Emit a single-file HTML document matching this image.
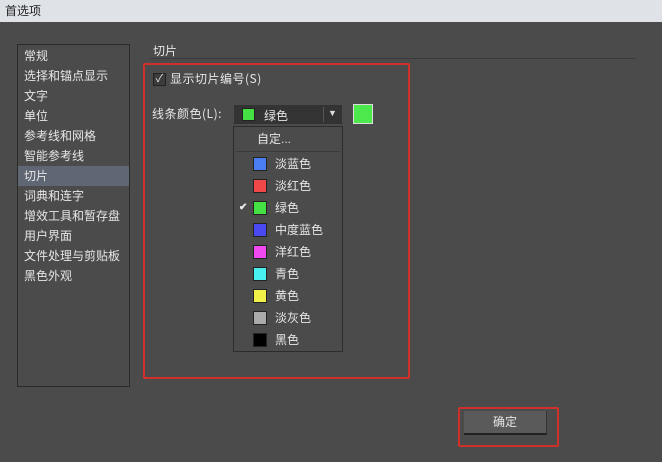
<!DOCTYPE html><html><head><meta charset="utf-8"><style>
body{margin:0;width:662px;height:462px;background:#4b4b4b;font-family:"Liberation Sans","Noto Sans CJK SC",sans-serif;font-size:12px;color:#e6e6e6;position:relative;overflow:hidden}
.a{position:absolute}
.cjk{font-family:"Noto Sans CJK SC",sans-serif}
.title{left:0;top:0;width:662px;height:22px;background:#dfe3e8;color:#222;font-size:12px;line-height:22px;text-indent:5px}
.list{left:17px;top:44px;width:111px;height:341px;border:1px solid #2a2a2a;background:#4b4b4b}
.list div{height:20px;line-height:20px;padding-left:6px}
.sel{background:#5f6674}
.red{border:2px solid #d0302a;border-radius:2px}
.item{position:absolute;left:0;width:108px;height:22px;line-height:22px}
.sw{position:absolute;left:19px;top:4px;width:12px;height:12px;border:1px solid #222}
.item span{position:absolute;left:41px}
</style></head><body>
<div class="a title">首选项</div>
<div class="a list">
<div style="margin-top:1px">常规</div><div>选择和锚点显示</div><div>文字</div><div>单位</div><div>参考线和网格</div><div>智能参考线</div><div class="sel">切片</div><div>词典和连字</div><div>增效工具和暂存盘</div><div>用户界面</div><div>文件处理与剪贴板</div><div>黑色外观</div>
</div>
<div class="a" style="left:153px;top:42px">切片</div>
<div class="a" style="left:150px;top:58px;width:486px;height:1px;background:#3a3a3a"></div>
<div class="a red" style="left:143px;top:63px;width:263px;height:312px"></div>
<div class="a" style="left:153px;top:73px;width:11px;height:11px;border:1px solid #222;background:#3c3c3c;color:#ddd;font-size:11px;line-height:11px;text-align:center">✓</div>
<div class="a cjk" style="left:170px;top:70px;letter-spacing:0.5px">显示切片编号(S)</div>
<div class="a cjk" style="left:152px;top:105px;letter-spacing:0.5px">线条颜色(L):</div>
<div class="a" style="left:234px;top:105px;width:108px;height:19px;background:#333"></div>
<div class="a" style="left:242px;top:108px;width:11px;height:11px;background:#44e044;border:1px solid #222"></div>
<div class="a" style="left:264px;top:107px">绿色</div>
<div class="a" style="left:323px;top:107px;width:1px;height:15px;background:#555"></div>
<div class="a" style="left:328px;top:108px;font-size:9px;color:#ddd">▼</div>
<div class="a" style="left:353px;top:104px;width:18px;height:18px;background:#4ce84c;border:1px solid #ddd"></div>
<div class="a" style="left:233px;top:126px;width:108px;height:224px;background:#4b4b4b;border:1px solid #2c2c2c">
<div class="a" style="left:23px;top:3px">自定...</div>
<div class="a" style="left:2px;top:24px;width:104px;height:1px;background:#3a3a3a"></div>
<div class="item" style="top:26px"><div class="sw" style="background:#4a7cf2"></div><span>淡蓝色</span></div>
<div class="item" style="top:48px"><div class="sw" style="background:#f04848"></div><span>淡红色</span></div>
<div class="item" style="top:70px"><b style="position:absolute;left:5px;font-size:10px;color:#eee">✔</b><div class="sw" style="background:#44e044"></div><span>绿色</span></div>
<div class="item" style="top:92px"><div class="sw" style="background:#4a4af2"></div><span>中度蓝色</span></div>
<div class="item" style="top:114px"><div class="sw" style="background:#f048f0"></div><span>洋红色</span></div>
<div class="item" style="top:136px"><div class="sw" style="background:#48f0f0"></div><span>青色</span></div>
<div class="item" style="top:158px"><div class="sw" style="background:#f0f048"></div><span>黄色</span></div>
<div class="item" style="top:180px"><div class="sw" style="background:#aaaaaa"></div><span>淡灰色</span></div>
<div class="item" style="top:202px"><div class="sw" style="background:#000"></div><span>黑色</span></div>
</div>
<div class="a red" style="left:458px;top:407px;width:97px;height:36px"></div>
<div class="a" style="left:464px;top:411px;width:82px;height:22px;background:#5a5a5a;border-bottom:2px solid #222;border-right:1px solid #333;text-align:center;line-height:22px">确定</div>
</body></html>
